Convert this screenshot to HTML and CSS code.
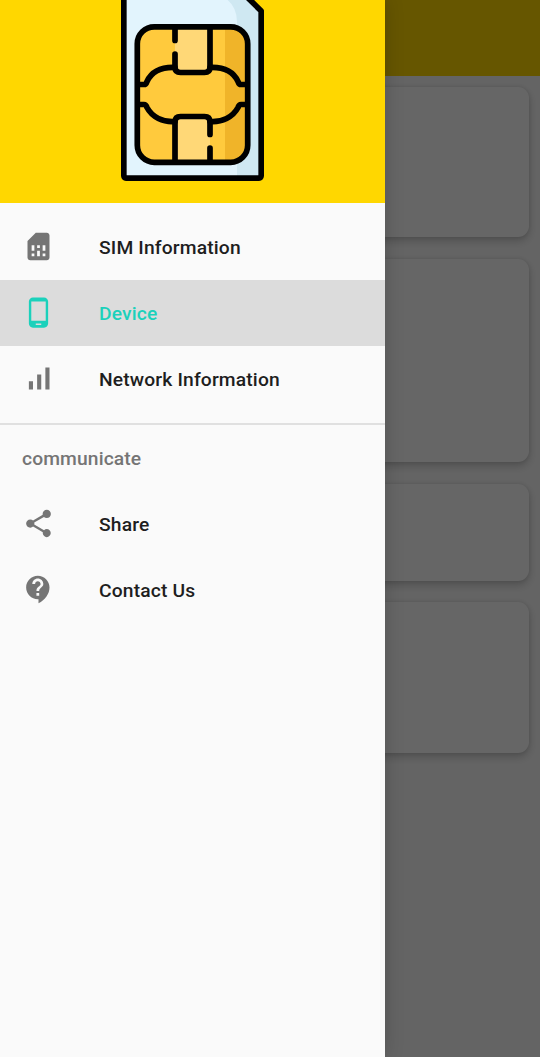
FILE: index.html
```html
<!DOCTYPE html>
<html lang="en">
<head>
<meta charset="utf-8">
<title>SIM Information</title>
<link rel="stylesheet" href="styles.css">
</head>
<body>
<div class="screen">
  <main class="content">
    <div class="appbar"></div>
    <div class="cards">
      <section class="card first"></section>
      <section class="card large"></section>
      <section class="card small"></section>
      <section class="card medium"></section>
    </div>
  </main>
  <div class="scrim"></div>
  <aside class="drawer">
    <header class="header">
      <svg class="sim" viewBox="0 0 143 181" width="143" height="181">
        <path fill="#e2f4fd" d="M3-6H123L140 10V175Q140 178 137 178H6Q3 178 3 175Z"/>
        <path fill="#cfe8f2" d="M104-6H123L140 10V178H116V22Q116 6 104-2Z"/>
        <rect x="16" y="27" width="111" height="135" rx="17" fill="#ffca3d"/>
        <path fill="#f0b429" d="M104 27H110Q127 27 127 44V145Q127 162 110 162H104Z"/>
        <path fill="#ffd877" d="M54 27H89V72H54ZM54 118H89V162H54Z"/>
        <g fill="none" stroke="#000" stroke-width="5.7" stroke-linecap="round" stroke-linejoin="round">
          <path d="M2.8-6V175Q2.800 178.200 6 178.200H137Q140.200 178.200 140.200 175V11L123-6"/>
          <rect x="16.300" y="26.800" width="110.400" height="135.500" rx="17"/>
          <path d="M54 28V40.500M54 54V67Q54 72.500 59.500 72.500H83.500Q89 72.500 89 67V28"/>
          <path d="M54 161V122Q54 116.500 59.500 116.500H83.500Q89 116.500 89 122V134.500M89 148V161"/>
          <path d="M18 84.500H23Q25 84.500 26 81.500C31 71 42 67 54 67.500M125 84.500H120Q118 84.500 117 81.500C112 71 101 67 89 67.500"/>
          <path d="M18 104.500H23Q25 104.500 26 107.500C31 117 42 122.500 54 121.500M125 104.500H120Q118 104.500 117 107.500C112 117 101 122.500 89 121.500"/>
        </g>
      </svg>
    </header>
    <nav class="menu">
      <a class="item">
        <svg class="icon" viewBox="0 0 24 24"><path d="M19.990 4c0-1.100-.89-2-1.990-2h-8L4 8v12c0 1.100.9 2 2 2h12.010c1.100 0 1.990-.9 1.990-2l-.01-16zM9 19H7v-2h2v2zm8 0h-2v-2h2v2zm-8-4H7v-4h2v4zm4 4h-2v-4h2v4zm0-6h-2v-2h2v2zm4 2h-2v-4h2v4z"/></svg>
        <span>SIM Information</span>
      </a>
      <a class="item selected">
        <svg class="icon" viewBox="0 0 24 24"><path d="M16 1H8C6.340 1 5 2.340 5 4v16c0 1.660 1.340 3 3 3h8c1.660 0 3-1.340 3-3V4c0-1.660-1.340-3-3-3zm-2 20h-4v-1h4v1zm3.250-3H6.750V4h10.500v14z"/></svg>
        <span>Device</span>
      </a>
      <a class="item">
        <svg class="icon" viewBox="0 0 24 24"><path d="M17 4h3v16h-3zM5 14h3v6H5zM11 9h3v11h-3z"/></svg>
        <span>Network Information</span>
      </a>
    </nav>
    <div class="group">
      <h2 class="subheader">communicate</h2>
      <a class="item">
        <svg class="icon" viewBox="0 0 24 24"><path d="M18 16.080c-.76 0-1.440.3-1.960.77L8.910 12.700c.05-.23.090-.46.090-.7s-.04-.47-.09-.7l7.050-4.110c.54.5 1.250.81 2.040.81 1.660 0 3-1.340 3-3s-1.340-3-3-3-3 1.340-3 3c0 .24.040.47.090.7L8.040 9.810C7.500 9.310 6.790 9 6 9c-1.660 0-3 1.340-3 3s1.340 3 3 3c.79 0 1.500-.31 2.040-.81l7.120 4.160c-.05.21-.08.43-.08.65 0 1.610 1.310 2.920 2.920 2.920s2.920-1.310 2.920-2.920-1.310-2.920-2.920-2.920z"/></svg>
        <span>Share</span>
      </a>
      <a class="item">
        <svg class="icon" viewBox="0 0 24 24"><path d="M11.500 2C6.810 2 3 5.810 3 10.500S6.810 19 11.500 19h.5v3c4.860-2.340 8-7 8-11.500C20 5.810 16.190 2 11.500 2zm1 14.500h-2v-2h2v2zm0-3.500h-2c0-3.250 3-3 3-5 0-1.100-.9-2-2-2s-2 .9-2 2h-2c0-2.210 1.790-4 4-4s4 1.790 4 4c0 2.500-3 2.750-3 5z"/></svg>
        <span>Contact Us</span>
      </a>
    </div>
  </aside>
</div>
</body>
</html>
```
FILE: styles.css
```css
* { box-sizing: border-box; }

body {
  margin: 0;
  font-family: Roboto, sans-serif;
}

.screen {
  position: relative;
  display: grid;
  height: 1057px;
  overflow: hidden;
}

.content {
  background: #fafafa;
}

.appbar {
  height: 76px;
  background: #ffd700;
}

.cards {
  display: flex;
  flex-direction: column;
  gap: 22px;
  padding: 11px;
}

.card {
  border-radius: 11px;
  background: #fff;
  box-shadow: 0 4px 9px rgba(0, 0, 0, 0.2), 0 0 4px rgba(0, 0, 0, 0.1);
}

.first { height: 150px; }
.medium { height: 151px; }
.large { height: 203px; }
.small { height: 97px; }
.small + .medium { margin-top: -1px; }

.scrim {
  position: absolute;
  inset: 0;
  background: rgba(0, 0, 0, 0.6);
}

.drawer {
  position: absolute;
  top: 0;
  bottom: 0;
  left: 0;
  width: 385px;
  background: #fafafa;
  box-shadow: 0 0 18px rgba(0, 0, 0, 0.18);
}

.header {
  display: flex;
  justify-content: center;
  height: 203px;
  background: #ffd700;
}

.sim {
  flex: none;
}

.menu {
  padding: 11px 0;
}

.item {
  display: flex;
  align-items: center;
  gap: 44px;
  height: 66px;
  padding: 0 22px;
  color: #1e1e1e;
  font-size: 19.25px;
  font-weight: 500;
  letter-spacing: 0.15px;
}

.icon {
  width: 33px;
  height: 33px;
  margin-bottom: 1px;
  fill: #757575;
}

.selected {
  background: #dcdcdc;
  color: #1bd1bb;
}

.selected .icon {
  fill: #1bd1bb;
}

.group {
  border-top: 2px solid #e0e0e0;
}

.group .icon {
  margin-bottom: 2px;
}

.subheader {
  height: 66px;
  margin: 0;
  padding-left: 22px;
  color: #757575;
  font-size: 19.25px;
  font-weight: 500;
  letter-spacing: 0.12px;
  line-height: 67px;
}
```
